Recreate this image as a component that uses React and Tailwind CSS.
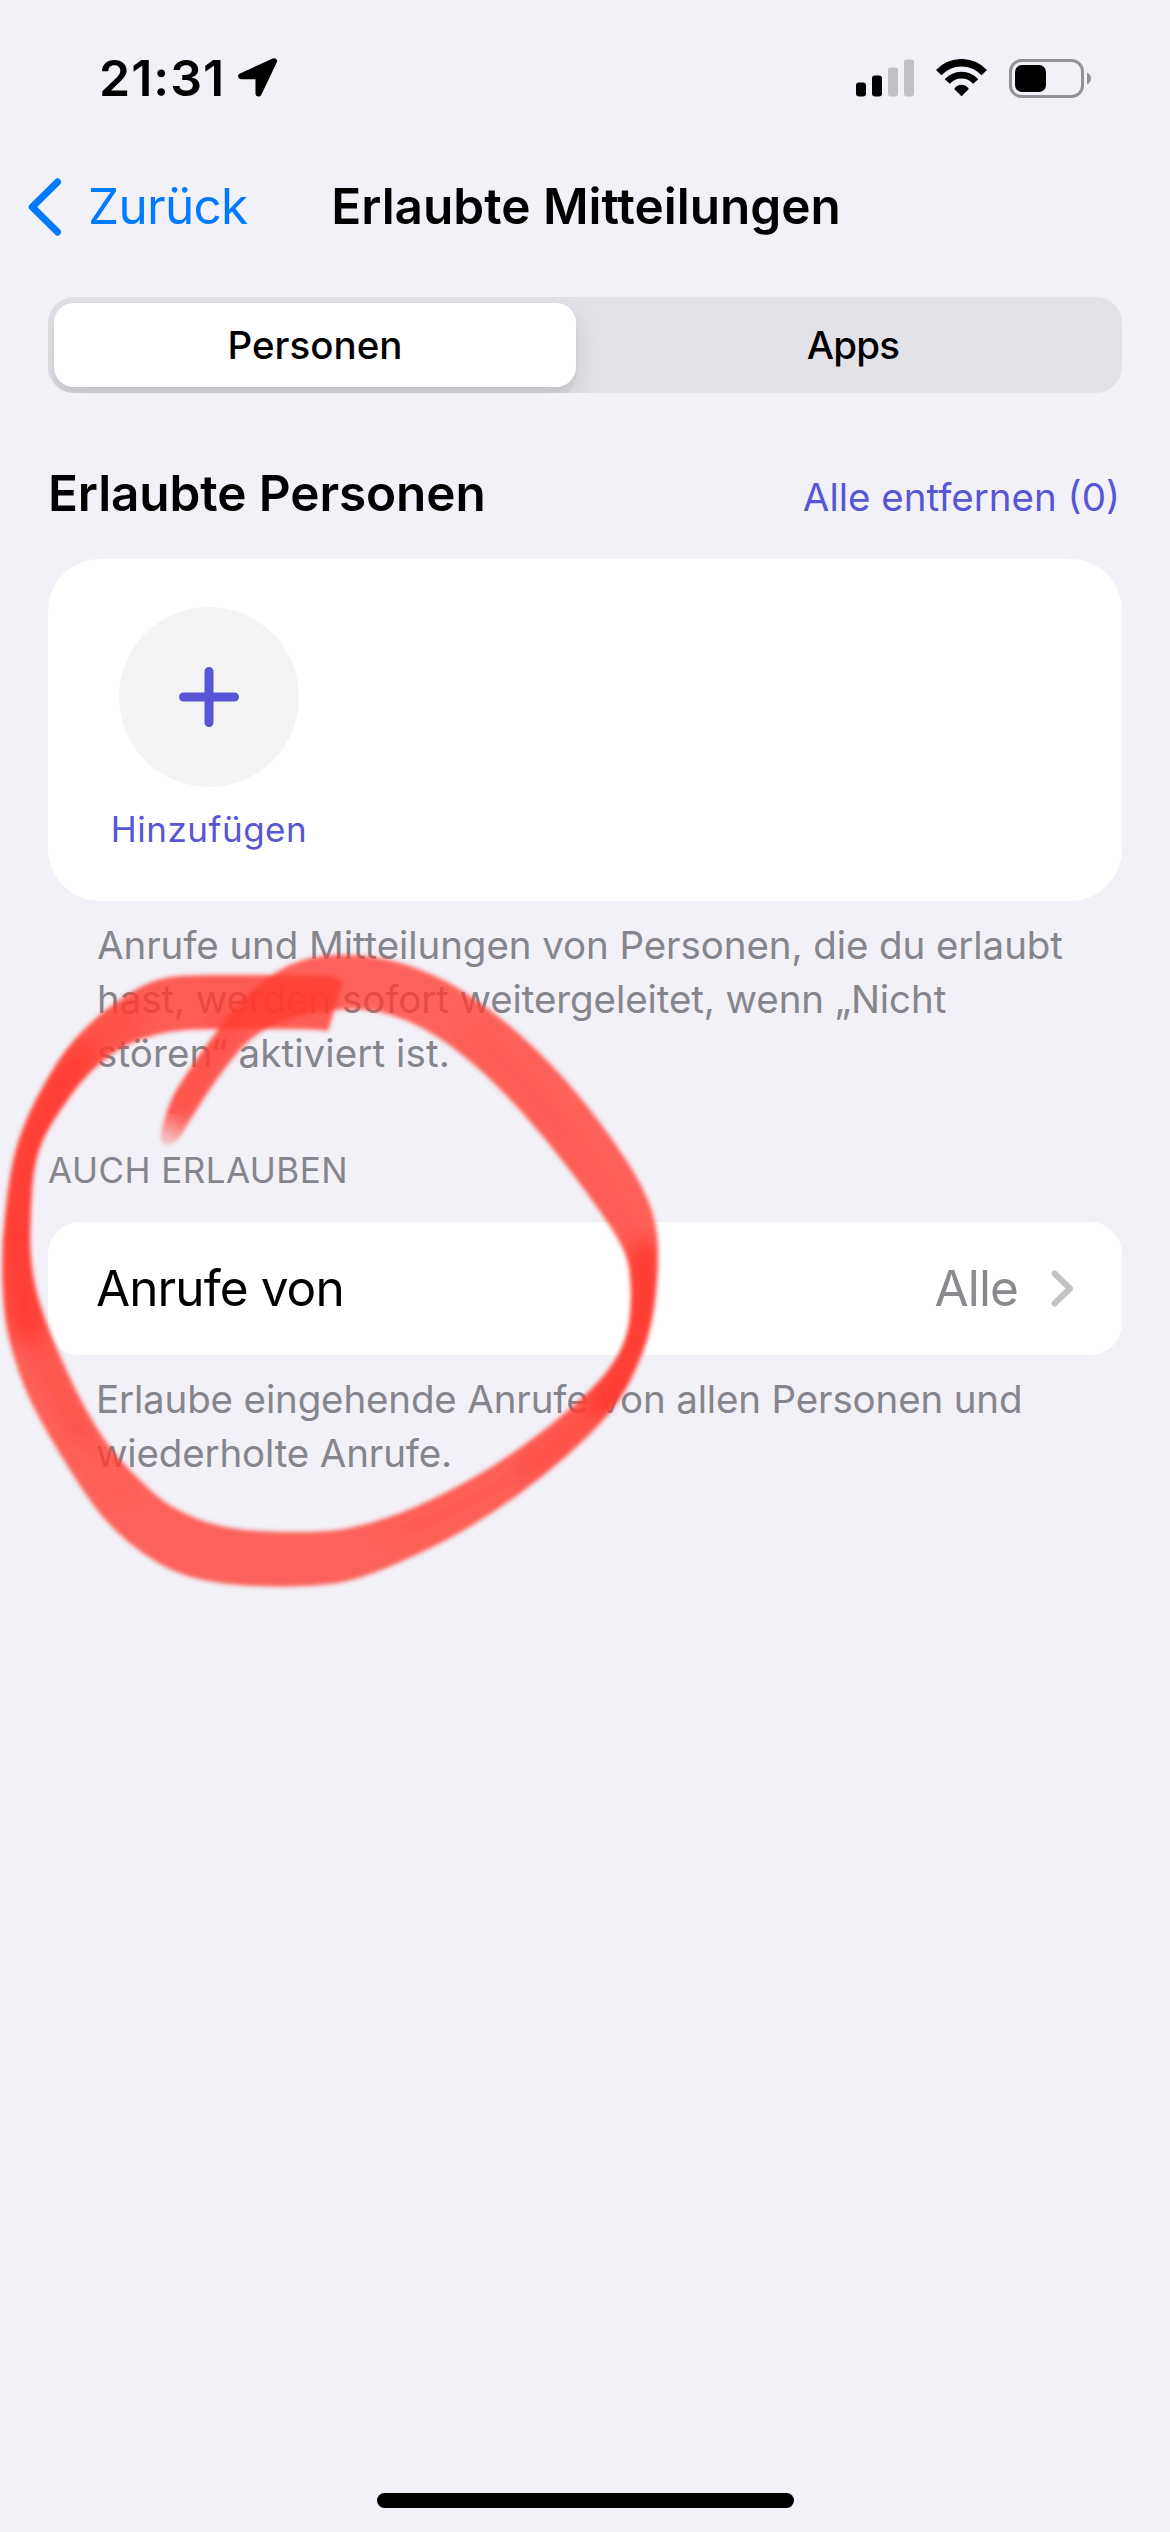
import { useState } from "react";

const TABS = ["Personen", "Apps"];

// edges of the marker stroke, [x, y] in page pixels
const START_OUTER = [[343, 982], [336, 976], [320, 975], [250, 975], [180, 975], [155, 980], [134, 990], [98, 1015], [67, 1047], [45, 1082], [27, 1117], [15, 1150], [7, 1193], [3, 1240]];
const START_INNER = [[30, 1240], [31, 1200], [34, 1167], [42, 1140], [58, 1113], [85, 1076], [116, 1050], [143, 1038], [170, 1031], [201, 1029], [260, 1029], [312, 1029], [328, 1031]];
const LOOP_OUTER = [[3, 1236], [2, 1267], [3, 1300], [7, 1333], [20, 1377], [36, 1413], [67, 1466], [94, 1507], [116, 1532], [143, 1554], [170, 1570], [196, 1579], [232, 1585], [277, 1587], [312, 1586], [348, 1582], [388, 1568], [446, 1541], [496, 1511], [545, 1475], [589, 1436], [620, 1401], [641, 1359], [653, 1320], [658, 1273], [658, 1233], [649, 1200], [629, 1163], [589, 1107], [545, 1057], [500, 1017], [455, 985], [415, 967], [379, 957], [339, 954], [313, 957], [290, 964], [268, 977], [241, 1000], [210, 1040], [187, 1073], [172, 1097], [165, 1117], [160, 1137], [163, 1145], [171, 1145], [179, 1138]];
const LOOP_INNER = [[179, 1138], [196, 1110], [223, 1070], [250, 1038], [277, 1023], [308, 1013], [353, 1008], [388, 1013], [424, 1028], [460, 1052], [500, 1088], [545, 1138], [585, 1190], [611, 1227], [627, 1255], [631, 1280], [631, 1310], [627, 1337], [612, 1367], [585, 1396], [545, 1430], [496, 1465], [446, 1493], [400, 1514], [353, 1528], [321, 1532], [277, 1532], [241, 1530], [210, 1524], [183, 1513], [161, 1500], [134, 1475], [107, 1445], [80, 1400], [54, 1343], [38, 1300], [31, 1265], [30, 1236]];

function curve(points) {
  let d = `${points[0][0]} ${points[0][1]}`;
  for (let i = 1; i < points.length - 1; i++) {
    const [x, y] = points[i];
    const [nx, ny] = points[i + 1];
    d += ` Q${x} ${y} ${(x + nx) / 2} ${(y + ny) / 2}`;
  }
  const last = points[points.length - 1];
  return `${d} L${last[0]} ${last[1]}`;
}

const START_PATH = `M${curve(START_OUTER)} L${curve(START_INNER)} Z`;
const LOOP_PATH = `M${curve(LOOP_OUTER)} L${curve(LOOP_INNER)} Z`;

function MarkerCircle() {
  return (
    <svg
      className="absolute left-0 top-[900px] pointer-events-none"
      width="700"
      height="720"
      viewBox="0 900 700 720"
      aria-hidden="true"
    >
      <defs>
        <filter id="soft" x="-5%" y="-5%" width="110%" height="110%">
          <feGaussianBlur stdDeviation="2" />
        </filter>
        <filter id="ink" x="-30%" y="-30%" width="160%" height="160%">
          <feGaussianBlur stdDeviation="12" />
        </filter>
        <clipPath id="marker">
          <path d={START_PATH} />
          <path d={LOOP_PATH} />
        </clipPath>
        <mask id="tail" maskUnits="userSpaceOnUse" x="0" y="900" width="700" height="720">
          <rect x="0" y="900" width="700" height="720" fill="white" />
          <ellipse cx="164" cy="1146" rx="22" ry="20" fill="black" fillOpacity="0.85" filter="url(#ink)" />
        </mask>
      </defs>
      <g filter="url(#soft)" mask="url(#tail)" fill="#ff3b30">
        <path d={START_PATH} fillOpacity="0.82" />
        <path d={LOOP_PATH} fillOpacity="0.79" />
        <g clipPath="url(#marker)">
          <g filter="url(#ink)" fill="none" stroke="#ff3b30" strokeLinecap="round">
            <path d="M78 1062 Q20 1130 17 1240" strokeWidth="38" />
            <path d="M130 1015 Q95 1035 70 1070" strokeWidth="22" strokeOpacity="0.6" />
            <path d="M17 1230 Q18 1290 30 1325" strokeWidth="40" />
            <path d="M30 1325 Q50 1380 80 1430" strokeWidth="20" strokeOpacity="0.5" />
            <path d="M80 1430 Q95 1460 125 1495" strokeWidth="12" strokeOpacity="0.4" />
            <path d="M644 1260 Q652 1340 605 1400" strokeWidth="42" />
            <path d="M605 1400 Q575 1435 530 1465" strokeWidth="22" strokeOpacity="0.65" />
            <path d="M530 1465 Q470 1507 390 1535" strokeWidth="14" strokeOpacity="0.4" />
            <path d="M470 1030 Q560 1110 640 1245" strokeWidth="12" strokeOpacity="0.45" />
            <path d="M178 1108 Q205 1060 236 1020" strokeWidth="15" strokeOpacity="0.8" />
          </g>
        </g>
      </g>
    </svg>
  );
}

function StatusBar() {
  return (
    <div className="flex items-center justify-between h-[156px] pl-[99px] pr-[79px]">
      <div className="flex items-center">
        <span className="text-[50px] font-semibold leading-none tracking-[1px]">21:31</span>
        <svg className="ml-[13px]" width="40" height="40" viewBox="0 0 40 40">
          <path
            d="M36 3.2 3.2 18.2H20.5V35.6Z"
            stroke="black"
            strokeWidth="6"
            strokeLinejoin="round"
          />
        </svg>
      </div>
      <div className="flex items-center">
        <svg width="58" height="38" viewBox="0 0 58 38">
          <rect x="0" y="23.5" width="10" height="14" rx="3" />
          <rect x="16" y="16.5" width="10" height="21" rx="3" />
          <rect x="32" y="8.5" width="10" height="29" rx="3" fill="#c1c0c5" />
          <rect x="48" y="0.5" width="10" height="37" rx="3" fill="#c1c0c5" />
        </svg>
        <svg className="ml-[22px]" width="51" height="38" viewBox="0 0 51 38">
          <g fill="none" stroke="black">
            <path d="M2.7 13.6A31.25 31.25 0 0 1 48.3 13.6" strokeWidth="7.5" />
            <path d="M11.3 22.5A18.9 18.9 0 0 1 39.7 22.5" strokeWidth="6.8" />
          </g>
          <path d="M25.5 37.3 18.2 29.9Q21 25.8 25.5 25.8T32.8 29.9Z" />
        </svg>
        <svg className="ml-[22px]" width="82" height="39" viewBox="0 0 82 39">
          <rect x="1.5" y="1.5" width="72" height="36" rx="11" fill="none" stroke="#939297" strokeWidth="3" />
          <rect x="6" y="6" width="31" height="27" rx="7" />
          <path d="M78 13.5Q82 15.5 82 19.5T78 25.5Z" fill="#939297" />
        </svg>
      </div>
    </div>
  );
}

function NavBar() {
  return (
    <div className="grid grid-cols-[1fr_auto_1fr] items-center h-[102px] pl-[28px] pr-[26px]">
      <button className="flex items-center text-[#007aff]">
        <svg width="34" height="58" viewBox="0 0 34 58" fill="none">
          <path
            d="M29.5 4 4.2 29 29.5 54"
            stroke="currentColor"
            strokeWidth="7"
            strokeLinecap="round"
            strokeLinejoin="round"
          />
        </svg>
        <span className="ml-[26px] text-[49.5px] leading-none tracking-[-0.7px]">Zurück</span>
      </button>
      <h1 className="text-[49.5px] font-semibold leading-none">Erlaubte Mitteilungen</h1>
    </div>
  );
}

function Segmented() {
  const [active, setActive] = useState("Personen");

  return (
    <div className="mt-[39px] grid grid-cols-2 h-24 p-[6px] rounded-[26px] bg-[#e3e2e8] overflow-hidden">
      {TABS.map((tab) => (
        <button
          key={tab}
          onClick={() => setActive(tab)}
          className={
            active === tab
              ? "mr-[9px] pt-[2px] rounded-[20px] bg-white text-[38.5px] font-medium shadow-[0_9px_24px_rgba(0,0,0,0.12),0_9px_3px_rgba(0,0,0,0.04)]"
              : "ml-[5px] pt-[2px] rounded-[20px] text-[38.5px] font-medium tracking-[-0.8px]"
          }
        >
          {tab}
        </button>
      ))}
    </div>
  );
}

export default function App() {
  return (
    <div className="relative flex flex-col w-[1170px] h-[2532px] overflow-hidden bg-[#f2f1f7] text-black font-['Inter',sans-serif]">
      <StatusBar />
      <NavBar />

      <main className="px-12">
        <Segmented />

        <div className="mt-[70px] flex items-baseline justify-between pr-[2px]">
          <h2 className="text-[49.5px] font-semibold leading-[60px] tracking-[-0.1px]">Erlaubte Personen</h2>
          <button className="text-[38.5px] leading-none text-[#5856d6]">Alle entfernen (0)</button>
        </div>

        <div className="mt-9 h-[342px] pt-12 pl-14 rounded-[52px] bg-white">
          <button className="flex flex-col items-center w-[210px] text-[#5856d6]">
            <span className="flex items-center justify-center size-[180px] rounded-full bg-[#f4f4f4]">
              <svg width="60" height="60" viewBox="0 0 60 60" fill="none">
                <path d="M30 4.5V55.5M4.5 30H55.5" stroke="currentColor" strokeWidth="9" strokeLinecap="round" />
              </svg>
            </span>
            <span className="mt-5 text-[35px] leading-[44px] tracking-[0.5px]">Hinzufügen</span>
          </button>
        </div>
        <p className="mt-[17px] pl-[49px] text-[38.5px] leading-[54px] tracking-[-0.08px] text-[#85858b] whitespace-nowrap">
          Anrufe und Mitteilungen von Personen, die du erlaubt
          <br />
          hast, werden sofort weitergeleitet, wenn „Nicht
          <br />
          <span className="tracking-[0.1px]">stören“ aktiviert ist.</span>
        </p>

        <h3 className="mt-[68px] text-[35px] leading-[44px] tracking-[0.45px] text-[#85858b]">AUCH ERLAUBEN</h3>
        <button className="mt-[30px] flex items-center w-full h-[133px] pl-[48px] pr-[48px] rounded-[32px] bg-white text-[49.5px] tracking-[-0.9px]">
          <span>Anrufe von</span>
          <span className="ml-auto text-[#8a8a8e]">Alle</span>
          <svg className="ml-[33px]" width="23" height="37" viewBox="0 0 23 37" fill="none">
            <path
              d="M3.5 3.5 19 18.5 3.5 33.5"
              stroke="#c4c4c6"
              strokeWidth="6"
              strokeLinecap="round"
              strokeLinejoin="round"
            />
          </svg>
        </button>
        <p className="mt-[17px] pl-12 text-[38.5px] leading-[54px] tracking-[-0.15px] text-[#85858b] whitespace-nowrap">
          Erlaube eingehende Anrufe von allen Personen und
          <br />
          wiederholte Anrufe.
        </p>
      </main>

      <div className="mt-auto mb-6 mx-auto w-[417px] h-[15px] rounded-full bg-black" />

      <MarkerCircle />
    </div>
  );
}
